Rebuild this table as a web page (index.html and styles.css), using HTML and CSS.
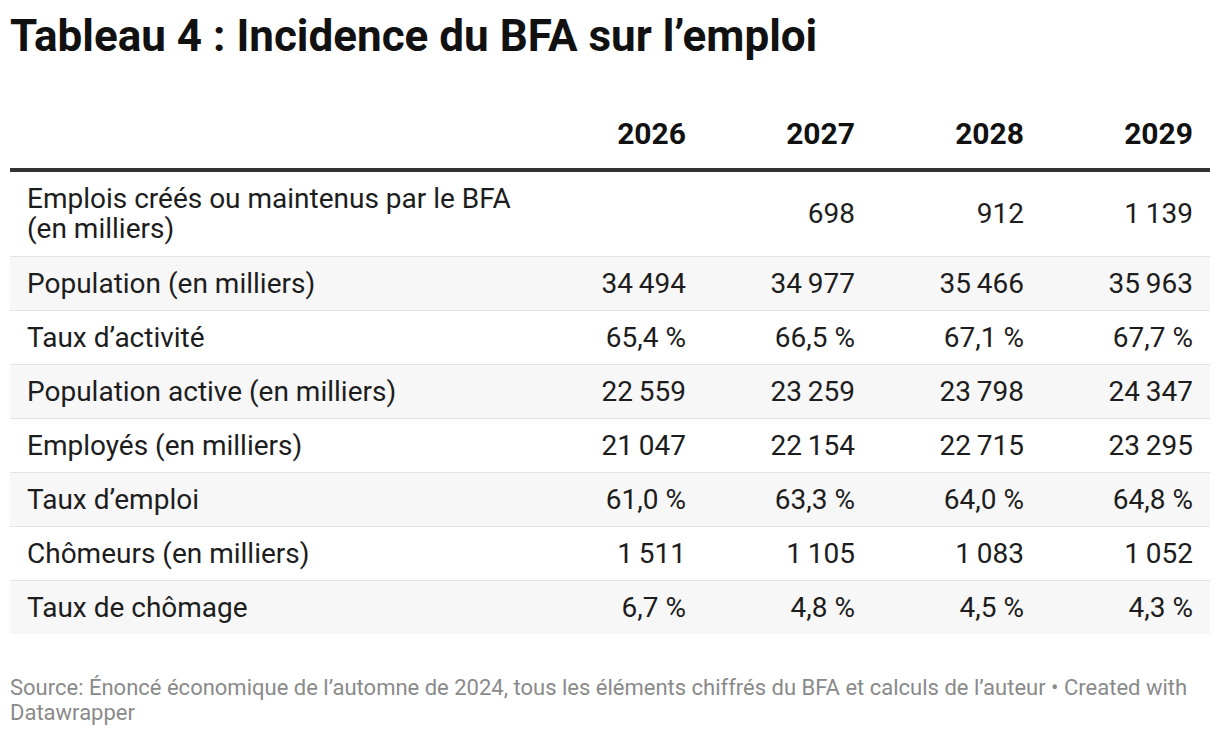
FILE: index.html
```html
<!DOCTYPE html>
<html lang="fr">
<head>
<meta charset="utf-8">
<title>Tableau 4 : Incidence du BFA sur l’emploi</title>
<link rel="stylesheet" href="styles.css">
</head>
<body>
<div class="chart">
  <h1 class="title">Tableau 4 : Incidence du BFA sur l’emploi</h1>
  <table class="data">
    <thead>
      <tr>
        <th class="label"></th>
        <th>2026</th>
        <th>2027</th>
        <th>2028</th>
        <th>2029</th>
      </tr>
    </thead>
    <tbody>
      <tr class="tall">
        <td class="label">Emplois créés ou maintenus par le BFA<br>(en milliers)</td>
        <td></td>
        <td>698</td>
        <td>912</td>
        <td>1&#8201;139</td>
      </tr>
      <tr>
        <td class="label">Population (en milliers)</td>
        <td>34&#8201;494</td>
        <td>34&#8201;977</td>
        <td>35&#8201;466</td>
        <td>35&#8201;963</td>
      </tr>
      <tr>
        <td class="label">Taux d’activité</td>
        <td>65,4 %</td>
        <td>66,5 %</td>
        <td>67,1 %</td>
        <td>67,7 %</td>
      </tr>
      <tr>
        <td class="label">Population active (en milliers)</td>
        <td>22&#8201;559</td>
        <td>23&#8201;259</td>
        <td>23&#8201;798</td>
        <td>24&#8201;347</td>
      </tr>
      <tr>
        <td class="label">Employés (en milliers)</td>
        <td>21&#8201;047</td>
        <td>22&#8201;154</td>
        <td>22&#8201;715</td>
        <td>23&#8201;295</td>
      </tr>
      <tr>
        <td class="label">Taux d’emploi</td>
        <td>61,0 %</td>
        <td>63,3 %</td>
        <td>64,0 %</td>
        <td>64,8 %</td>
      </tr>
      <tr>
        <td class="label">Chômeurs (en milliers)</td>
        <td>1&#8201;511</td>
        <td>1&#8201;105</td>
        <td>1&#8201;083</td>
        <td>1&#8201;052</td>
      </tr>
      <tr>
        <td class="label">Taux de chômage</td>
        <td>6,7 %</td>
        <td>4,8 %</td>
        <td>4,5 %</td>
        <td>4,3 %</td>
      </tr>
    </tbody>
  </table>
  <p class="footer">Source: Énoncé économique de l’automne de 2024, tous les éléments chiffrés du BFA et calculs de l’auteur • Created with Datawrapper</p>
</div>
</body>
</html>
```
FILE: styles.css
```css
html, body {
  margin: 0;
  padding: 0;
  background: #ffffff;
}

body {
  font-family: Roboto, "Liberation Sans", sans-serif;
  color: #1d1d1d;
}

.chart {
  padding: 10px 10px 0 10px;
}

.title {
  margin: 0;
  font-size: 44px;
  line-height: 52px;
  font-weight: 700;
  color: #111111;
}

.data {
  width: 1200px;
  margin-top: 57px;
  border-collapse: collapse;
  table-layout: fixed;
}

.data th,
.data td {
  width: 135px;
  padding: 12px 17px;
  text-align: right;
  font-size: 28px;
  line-height: 29px;
  white-space: nowrap;
}

.data .label {
  width: 490px;
  text-align: left;
  white-space: normal;
}

.data thead th {
  font-weight: 700;
  font-size: 30px;
  padding-bottom: 20px;
  padding-top: 0;
  border-bottom: 4px solid #333333;
  color: #111111;
}

.data tbody tr {
  border-bottom: 1px solid #e3e3e3;
}

.data tbody tr:last-child {
  border-bottom: none;
}

.data tbody tr:nth-child(even) {
  background: #f7f7f7;
}

.data tbody tr.tall td {
  line-height: 30px;
  padding-top: 12px;
  padding-bottom: 12px;
}

.footer {
  margin: 41px 0 0 0;
  font-size: 22px;
  line-height: 25px;
  color: #8a8a8a;
}
```
